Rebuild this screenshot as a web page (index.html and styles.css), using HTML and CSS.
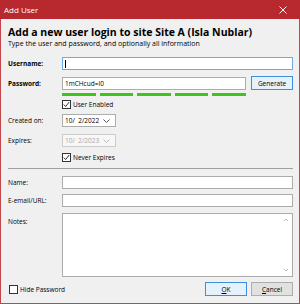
FILE: index.html
```html
<html>
<head>
	<link rel="stylesheet" href="styles.css">
</head>
<body>
	<div class="window">
		<div class="titlebar">
			<span class="title">Add User</span>
			<svg class="close" width="8" height="8" viewBox="0 0 8 8">
				<path d="M0.5 0.5 L7.5 7.5 M7.5 0.5 L0.5 7.5" stroke="#ffffff" stroke-width="1"/>
			</svg>
		</div>
		<div class="content">
			<div class="heading">Add a new user login to site Site A (Isla Nublar)</div>
			<div class="subtitle">Type the user and password, and optionally all information</div>

			<div class="row row_user">
				<div class="label bold">Username:</div>
				<div class="field focused"><span class="caret"></span></div>
			</div>
			<div class="row row_pass">
				<div class="label bold">Password:</div>
				<div class="field pass">1mCHcud=I0</div>
				<div class="button default gen">Generate</div>
			</div>
			<div class="bars">
				<div class="bar"></div>
				<div class="bar"></div>
				<div class="bar"></div>
				<div class="bar"></div>
				<div class="bar"></div>
			</div>
			<div class="check row_enabled">
				<svg class="box" width="9" height="9" viewBox="0 0 9 9">
					<rect x="0.5" y="0.5" width="8" height="8" fill="#ffffff" stroke="#333333"/>
					<path d="M1.8 4.6 L3.6 6.6 L7.2 2" fill="none" stroke="#333333" stroke-width="1"/>
				</svg>
				<span>User Enabled</span>
			</div>
			<div class="row row_created">
				<div class="label">Created on:</div>
				<div class="date">
					<span>10/&nbsp; 2/2022</span>
					<svg width="7" height="4" viewBox="0 0 7 4">
						<path d="M0.5 0.5 L3.5 3.5 L6.5 0.5" fill="none" stroke="#555555"/>
					</svg>
				</div>
			</div>
			<div class="row row_expires">
				<div class="label">Expires:</div>
				<div class="date disabled">
					<span>10/&nbsp; 2/2023</span>
					<svg width="7" height="4" viewBox="0 0 7 4">
						<path d="M0.5 0.5 L3.5 3.5 L6.5 0.5" fill="none" stroke="#bbbbbb"/>
					</svg>
				</div>
			</div>
			<div class="check row_never">
				<svg class="box" width="9" height="9" viewBox="0 0 9 9">
					<rect x="0.5" y="0.5" width="8" height="8" fill="#ffffff" stroke="#333333"/>
					<path d="M1.8 4.6 L3.6 6.6 L7.2 2" fill="none" stroke="#333333" stroke-width="1"/>
				</svg>
				<span>Never Expires</span>
			</div>
			<div class="separator"></div>
			<div class="row row_name">
				<div class="label">Name:</div>
				<div class="field"></div>
			</div>
			<div class="row row_email">
				<div class="label">E-email/URL:</div>
				<div class="field"></div>
			</div>
			<div class="row row_notes">
				<div class="label">Notes:</div>
				<div class="field notes">
					<svg class="scroll" width="6" height="56" viewBox="0 0 6 56">
						<path d="M1 4 L3 2 L5 4" fill="none" stroke="#c0c0c0"/>
						<path d="M1 52 L3 54 L5 52" fill="none" stroke="#c0c0c0"/>
					</svg>
				</div>
			</div>
			<div class="footer">
				<div class="check">
					<svg class="box" width="9" height="9" viewBox="0 0 9 9">
						<rect x="0.5" y="0.5" width="8" height="8" fill="#ffffff" stroke="#333333"/>
					</svg>
					<span>Hide Password</span>
				</div>
				<div class="buttons">
					<div class="button default"><u>O</u>K</div>
					<div class="button"><u>C</u>ancel</div>
				</div>
			</div>
		</div>
	</div>
</body>
</html>
```
FILE: styles.css
```css
body
{
	margin: 0;
	font-family: "Open Sans", "Noto Sans", sans-serif;
	color: #000000;
}
.window
{
	width: 300px;
	height: 304px;
	box-sizing: border-box;
	border: 1px solid #c2474d;
	border-top: none;
	background-color: #f0f0f0;
	display: flex;
	flex-direction: column;
}
.titlebar
{
	height: 19px;
	margin: 0 -1px;
	background-color: #b7282f;
	color: white;
	display: flex;
	align-items: center;
	justify-content: space-between;
	padding: 0 13px 0 4px;
}
.title
{
	font-size: 8px;
}
.content
{
	padding: 0 6px 0 7px;
	font-size: 6.5px;
}
.heading
{
	margin-top: 6px;
	font-size: 10.5px;
	font-weight: bold;
	line-height: 14px;
	white-space: nowrap;
}
.subtitle
{
	margin-top: 1px;
	line-height: 8px;
	font-size: 7px;
}
.row
{
	display: flex;
	align-items: center;
}
.label
{
	width: 54px;
	flex: none;
}
.bold
{
	font-weight: bold;
}
.field
{
	flex: 1;
	height: 13px;
	box-sizing: border-box;
	border: 1px solid #acacac;
	background-color: white;
	padding-left: 2px;
	display: flex;
	align-items: center;
}
.focused
{
	border-color: #6fa9e0;
}
.caret
{
	width: 1px;
	height: 8px;
	background-color: #000000;
}
.pass
{
	flex: none;
	width: 184px;
}
.row_user
{
	margin-top: 9px;
}
.row_pass
{
	margin-top: 6px;
}
.button
{
	height: 14px;
	box-sizing: border-box;
	border: 1px solid #adadad;
	background-color: #e1e1e1;
	display: flex;
	align-items: center;
	justify-content: center;
	width: 42px;
}
.default
{
	border-color: #3c8fdc;
	background-color: #e5f1fb;
}
.gen
{
	margin-left: auto;
}
.bars
{
	margin: 3px 0 0 54px;
	width: 184px;
	display: flex;
	gap: 4px;
}
.bar
{
	flex: 1;
	height: 3px;
	background-color: #3ec41e;
}
.check
{
	display: flex;
	align-items: center;
	gap: 2px;
}
.box
{
	flex: none;
}
.row_enabled
{
	margin: 4px 0 0 54px;
}
.date
{
	width: 54px;
	height: 13px;
	box-sizing: border-box;
	border: 1px solid #acacac;
	background-color: white;
	display: flex;
	align-items: center;
	justify-content: space-between;
	padding: 0 5px 0 2px;
}
.disabled
{
	color: #a6a6a6;
	border-color: #cccccc;
	background-color: #f7f7f7;
}
.row_created
{
	margin-top: 5px;
}
.row_expires
{
	margin-top: 7px;
}
.row_never
{
	margin: 6px 0 0 54px;
}
.separator
{
	margin-top: 6px;
	height: 1px;
	background-color: #a0a0a0;
}
.row_name
{
	margin-top: 7px;
}
.row_email
{
	margin-top: 5px;
}
.row_notes
{
	margin-top: 6px;
	align-items: flex-start;
}
.row_notes .label
{
	padding-top: 4px;
}
.notes
{
	height: 64px;
	justify-content: flex-end;
	padding-right: 3px;
}
.footer
{
	margin-top: 5px;
	display: flex;
	align-items: center;
	justify-content: space-between;
	padding-left: 1px;
}
.buttons
{
	display: flex;
	gap: 4px;
}
```
